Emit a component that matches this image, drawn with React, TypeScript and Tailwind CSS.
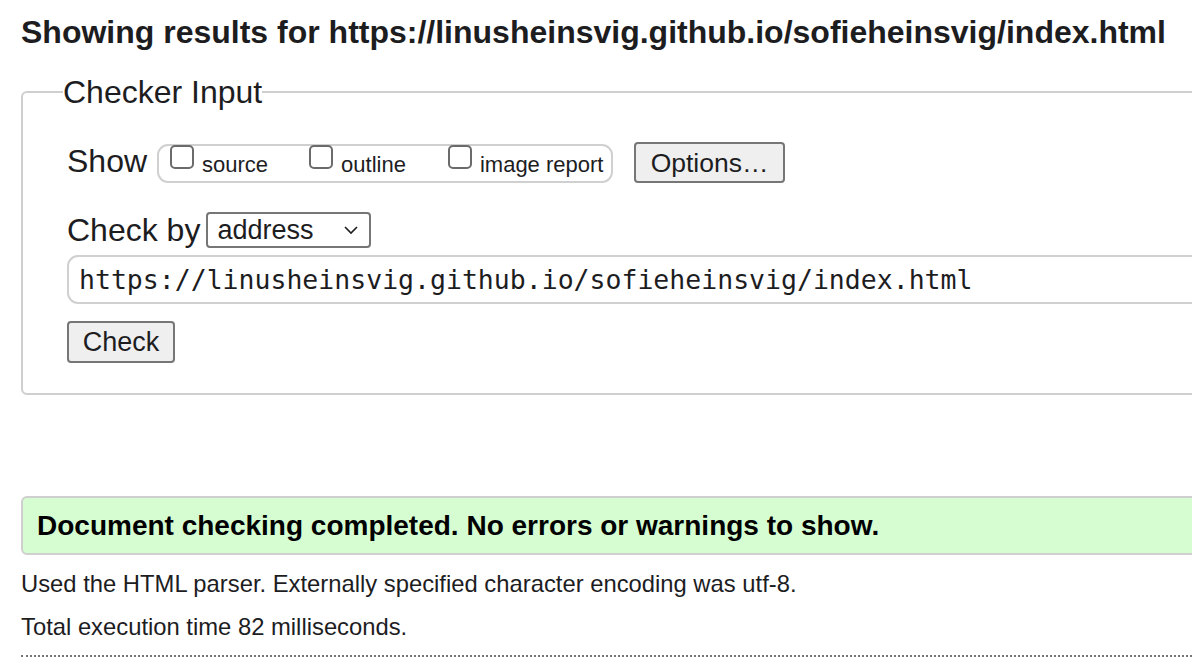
import React from 'react';

const url = "https://linusheinsvig.github.io/sofieheinsvig/index.html";

const Box = ({ label, gap }: { label: string; gap: string }) => (
    <label className={`flex items-start ${gap}`}>
        <span className="-mt-[1px] w-[24px] h-[24px] border-2 border-[#6b6b6b] rounded-[5px] bg-white" />
        <span className="ml-[8px] text-[22px] leading-[28px] mt-[5px]">{label}</span>
    </label>
)

export default function App() {
    return (
        <div className="w-[1192px] h-[660px] overflow-hidden bg-white text-[#1d1d1f] font-['Liberation_Sans',Arial,sans-serif]">
            <div className="w-[1400px] pl-[21px] pt-[13px]">
                <h1 className="text-[32px] leading-[38px] font-bold text-[#1d1d1f]">
                    Showing results for {url}
                </h1>

                <fieldset className="mt-[26px] border-2 border-[#cfcfcf] rounded-[6px] pl-[44px] pr-4 pt-[35px] pb-[30px] min-w-0">
                    <legend className="-ml-[4px] px-0 text-[32px] leading-[30px]">Checker Input</legend>

                    <div className="flex items-start h-[41px]">
                        <span className="mt-[1px] text-[32px] leading-[36px] mr-[10px]">Show</span>
                        <div className="mt-[2px] flex items-start h-[39px] w-[456px] border-2 border-[#d0d0d0] rounded-[11px] pl-[11px]">
                            <Box label="source" gap="mr-[41px]" />
                            <Box label="outline" gap="mr-[42px]" />
                            <Box label="image report" gap="" />
                        </div>
                        <button className="ml-[21px] h-[41px] w-[151px] bg-[#efefef] border-2 border-[#767676] rounded-[4px] text-[26.5px] leading-[30px]">
                            Options…
                        </button>
                    </div>

                    <div className="flex items-center h-[36px] mt-[29px]">
                        <span className="text-[32px] leading-[36px] mr-[6px]">Check by</span>
                        <div className="flex items-center justify-between w-[165px] h-[36px] border-2 border-[#767676] rounded-[4px] pl-[9px] pr-[10px]">
                            <span className="text-[27px] leading-[30px]">address</span>
                            <svg width="16" height="10" viewBox="0 0 16 10" fill="none" stroke="#1d1d1f" strokeWidth="1.6">
                                <path d="M2 2 L8 8 L14 2" />
                            </svg>
                        </div>
                    </div>

                    <div className="mt-[7px] h-[49px] border-2 border-[#d0d0d0] rounded-[11px] flex items-center pl-[10px]">
                        <span className="font-['DejaVu_Sans_Mono',monospace] text-[26.5px] leading-[30px]">{url}</span>
                    </div>

                    <button className="mt-[17px] w-[108px] h-[42px] bg-[#efefef] border-2 border-[#767676] rounded-[4px] text-[27px] leading-[30px]">
                        Check
                    </button>
                </fieldset>

                <div className="mt-[101px] h-[59px] bg-[#d6fdd2] border-2 border-[#cfcfcf] rounded-[6px] flex items-center pl-[14px]">
                    <p className="text-[28px] font-bold text-black">
                        Document checking completed. No errors or warnings to show.
                    </p>
                </div>

                <p className="mt-[14px] text-[23.8px] leading-[30px]">
                    Used the HTML parser. Externally specified character encoding was utf-8.
                </p>
                <p className="mt-[13px] text-[23.8px] leading-[30px]">
                    Total execution time 82 milliseconds.
                </p>
                <div className="mt-[13px] border-t-2 border-dotted border-[#777]" />
            </div>
        </div>
    )
}
